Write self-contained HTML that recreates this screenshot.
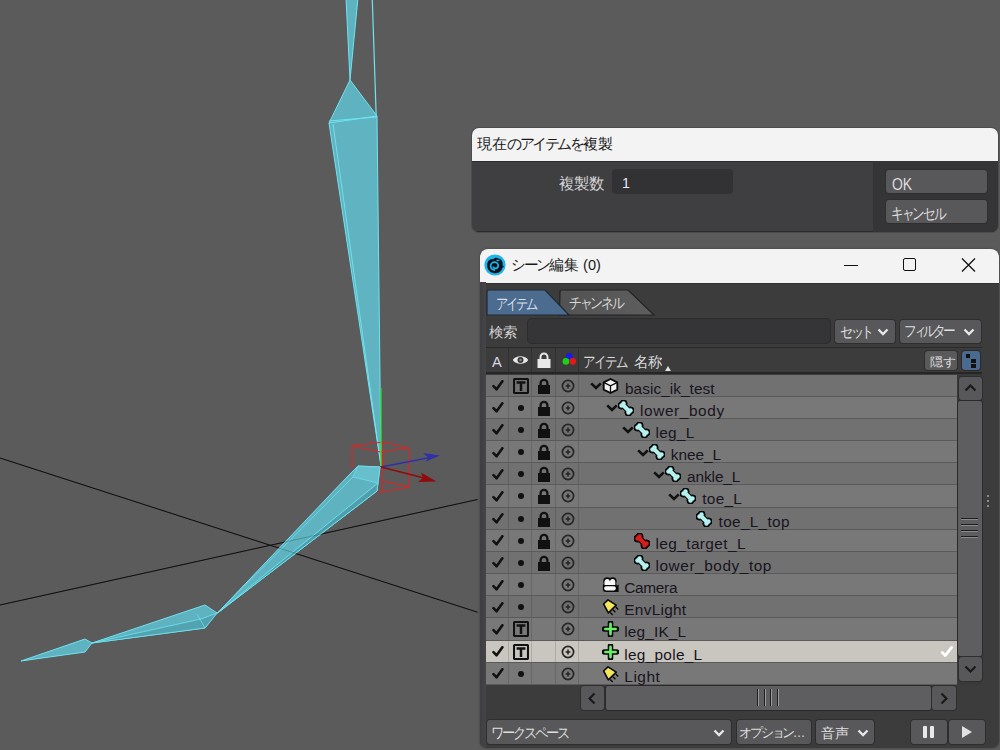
<!DOCTYPE html>
<html><head><meta charset="utf-8"><style>
*{box-sizing:border-box;margin:0;padding:0}
html,body{width:1000px;height:750px;overflow:hidden;background:#5b5b5b;font-family:"Liberation Sans",sans-serif;}
.a{position:absolute}
.t{position:absolute;white-space:nowrap}
.k{margin-right:-0.16em}
.ks{margin-right:-0.26em}
#vp{position:absolute;left:0;top:0}
#dlg{position:absolute;left:472px;top:128px;width:526px;height:104px;border-radius:7px;overflow:hidden;background:#3f3f41;box-shadow:0 0 0 1px #4c4c4c}
#win{position:absolute;left:480px;top:249px;width:519px;height:499px;border-radius:8px 8px 7px 7px;overflow:hidden;background:#3c3c3d;box-shadow:0 0 3px rgba(0,0,0,0.3)}
.tb{position:absolute;left:0;top:0;height:33px;background:#f3f3f3;color:#1a1a1a;font-size:15px}
.btn{position:absolute;background:#58585a;border-radius:3px;color:#dedede;font-size:14px;box-shadow:0 0 0 1px #2e2e2e}
.row{position:absolute;left:6px;width:471px;height:22px}
.cell{position:absolute;top:0;height:22px;border-right:1px solid rgba(0,0,0,0.13)}
.nm{position:absolute;z-index:3;font-size:15.4px;letter-spacing:0.2px;color:#181420;top:5px;white-space:nowrap}
</style></head>
<body>

<svg width="0" height="0" style="position:absolute">
<defs>
 <symbol id="chk" viewBox="0 0 12 11"><path d="M1.5 6.2 L4.6 9.3 L10.4 1.2" fill="none" stroke="#111" stroke-width="2.6" stroke-linecap="round" stroke-linejoin="round"/></symbol>
 <symbol id="tbx" viewBox="0 0 16 16"><rect x="1" y="1" width="14" height="14" rx="0.8" fill="none" stroke="#111" stroke-width="2.1"/><path d="M3.6 4.6 H12.4 M8 4.6 V13" stroke="#111" stroke-width="2.5" fill="none"/></symbol>
 <symbol id="lck" viewBox="0 0 14 16"><path d="M3.6 7.5 V5.2 A3.4 3.4 0 0 1 10.4 5.2 V7.5" fill="none" stroke="#111" stroke-width="2.3"/><rect x="1" y="7" width="12" height="9" fill="#111"/></symbol>
 <symbol id="cpl" viewBox="0 0 14 14"><circle cx="7" cy="7" r="5.6" fill="none" stroke="#262626" stroke-width="1.7"/><path d="M7 4.6 V9.4 M4.6 7 H9.4" stroke="#262626" stroke-width="1.6"/></symbol>
 <symbol id="chev" viewBox="0 0 12 8"><path d="M1.2 1.4 L6 6 L10.8 1.4" fill="none" stroke="#111" stroke-width="2.7" stroke-linejoin="miter"/></symbol>
 <symbol id="bone" viewBox="0 0 16 16"><g fill="#0a0a0a" stroke="#0a0a0a"><line x1="4.5" y1="4.5" x2="11.5" y2="11.5" stroke-width="6.6"/><circle cx="3.4" cy="5.6" r="3.5"/><circle cx="5.6" cy="3.4" r="3.5"/><circle cx="10.4" cy="12.6" r="3.5"/><circle cx="12.6" cy="10.4" r="3.5"/></g><g fill="#b4f2f0" stroke="#b4f2f0"><line x1="4.5" y1="4.5" x2="11.5" y2="11.5" stroke-width="4"/><circle cx="3.5" cy="5.5" r="2.2" stroke="none"/><circle cx="5.5" cy="3.5" r="2.2" stroke="none"/><circle cx="10.5" cy="12.5" r="2.2" stroke="none"/><circle cx="12.5" cy="10.5" r="2.2" stroke="none"/></g></symbol>
 <symbol id="boner" viewBox="0 0 16 16"><g fill="#0a0a0a" stroke="#0a0a0a"><line x1="4.5" y1="4.5" x2="11.5" y2="11.5" stroke-width="6.6"/><circle cx="3.4" cy="5.6" r="3.5"/><circle cx="5.6" cy="3.4" r="3.5"/><circle cx="10.4" cy="12.6" r="3.5"/><circle cx="12.6" cy="10.4" r="3.5"/></g><g fill="#dc1c1c" stroke="#dc1c1c"><line x1="4.5" y1="4.5" x2="11.5" y2="11.5" stroke-width="4"/><circle cx="3.5" cy="5.5" r="2.2" stroke="none"/><circle cx="5.5" cy="3.5" r="2.2" stroke="none"/><circle cx="10.5" cy="12.5" r="2.2" stroke="none"/><circle cx="12.5" cy="10.5" r="2.2" stroke="none"/></g></symbol>
 <symbol id="cube" viewBox="0 0 16 16"><path d="M8 1 L14.8 4.4 V11.6 L8 15 L1.2 11.6 V4.4 Z" fill="#f2f2f2" stroke="#0a0a0a" stroke-width="1.9" stroke-linejoin="round"/><path d="M1.5 4.6 L8 7.8 L14.5 4.6 M8 7.8 V14.5" fill="none" stroke="#0a0a0a" stroke-width="1.3"/></symbol>
 <symbol id="cam" viewBox="0 0 17 16"><g fill="#0a0a0a"><circle cx="5.2" cy="4.3" r="4"/><circle cx="10.6" cy="4.3" r="4"/><rect x="0.8" y="6" width="14" height="9" rx="3"/><path d="M12 10.5 L16.6 7.5 L16.6 15 L12 15 Z"/></g><g fill="#f8f8f8"><circle cx="5.2" cy="4.4" r="2.5"/><circle cx="10.6" cy="4.4" r="2.5"/><rect x="2.5" y="4.4" width="10.8" height="3.6"/><rect x="2.2" y="9.2" width="11.6" height="4.2" rx="1.8"/></g></symbol>
 <symbol id="lgt" viewBox="0 0 17 17"><path d="M1.6 5 L6 0.9 L14.2 6.2 L6.3 13.8 Z" fill="#f4e85a" stroke="#0a0a0a" stroke-width="1.6" stroke-linejoin="round"/><path d="M13.8 8.1 L16.2 10.6 M11 10.8 L13.4 13.3 M8.3 13.5 L10.7 16" stroke="#0a0a0a" stroke-width="1.4"/></symbol>
 <symbol id="plus" viewBox="0 0 16 16"><path d="M8 2 V14 M2 8 H14" stroke="#0a0a0a" stroke-width="5.6" stroke-linecap="round"/><path d="M8 2.9 V13.1 M2.9 8 H13.1" stroke="#6aee6a" stroke-width="2.7" stroke-linecap="round"/></symbol>
</defs></svg>

<svg id="vp" width="1000" height="750" viewBox="0 0 1000 750">
  <g stroke="#101010" stroke-width="1" fill="none">
    <line x1="0" y1="458" x2="477.5" y2="612.2"/>
    <line x1="0" y1="605" x2="477.5" y2="499.5"/>
  </g>
  <g fill="#5fb3c0" stroke="#6fe3f2" stroke-width="1" stroke-linejoin="round">
    <!-- top spike -->
    <polygon points="346,-2 358,-2 350,80"/>
    <line x1="372.3" y1="0" x2="376.2" y2="116" stroke-width="1.2"/>
    <!-- thigh pyramid -->
    <polygon points="350,80 377,116 333,124 329,123"/>
    <polygon points="329,123 377,116 381,466" fill="#60b4c2"/>
    <line x1="333" y1="124" x2="381" y2="466" stroke="#7ae8f5" stroke-width="0.8"/>
    <line x1="329" y1="121" x2="377" y2="117" />
    <!-- shin -->
    <polygon points="358,466 380,467 378,483 377,491 217.5,613 347,477"/>
    <polygon points="378,483 377,491 217.5,613" fill="#4e9eac" stroke-width="0.9"/>
    <polygon points="358,466 380,467 378,483 353,477" fill="#68bfcc" stroke-width="0.7"/>
    <line x1="353" y1="477" x2="217.5" y2="613" stroke-width="0.7"/>
    <!-- foot -->
    <polygon points="205,605 217,613 205,628 92,643"/>
    <polygon points="217,613 205,628 92,643 201,619" fill="#52a2b0" stroke-width="0.8"/>
    <line x1="197" y1="614" x2="205" y2="628" stroke-width="0.7"/>
    <!-- toe -->
    <polygon points="85,639 92,643 85,652 21,661"/>
  </g>
  <g stroke="#101010" stroke-width="1" fill="none" opacity="0.22">
    <line x1="0" y1="458" x2="477.5" y2="612.2"/>
    <line x1="0" y1="605" x2="477.5" y2="499.5"/>
  </g>
  <!-- red box -->
  <g stroke="#e02424" stroke-width="1.1" fill="none">
    <polyline points="352,468 352,446 383,442 409,448 380,452 352,446"/>
    <line x1="409" y1="448" x2="409" y2="487"/>
    <line x1="382" y1="452" x2="382" y2="492"/>
    <polyline points="377,492 382,492 409,487"/>
    <polyline points="382,481 409,487" />
    <line x1="383" y1="442" x2="383" y2="470"/>
  </g>
  <line x1="381" y1="388" x2="381" y2="466" stroke="#30d830" stroke-width="1.3"/>
  <g stroke-width="1.7">
    <line x1="381" y1="467" x2="430" y2="457.5" stroke="#3030a8"/>
    <polygon points="440,455.5 423,453 428,457.5 426,461.5" fill="#3030a8"/>
    <line x1="381" y1="467" x2="426" y2="478.5" stroke="#900c0c"/>
    <polygon points="436.5,481.5 421,472.5 423,477.5 418,482" fill="#900c0c"/>
  </g>
</svg>

<div id="dlg">
  <div class="tb" style="width:526px"></div>
  <div class="a" style="left:0;top:33px;width:526px;height:1px;background:#2c2c2e"></div>
  <div class="a" style="left:0;top:103px;width:526px;height:1px;background:#2a2a2c"></div>
  
  <div class="a" style="left:140px;top:41px;width:121px;height:25px;background:#323234;border-radius:4px"></div>
  
  <div class="a" style="left:401px;top:33px;width:125px;height:71px;background:#353537"></div>
  <div class="btn" style="left:414px;top:42px;width:101px;height:23px;"></div>
  <div class="btn" style="left:414px;top:72px;width:101px;height:23px;"></div>
</div>


<div id="win">
  <div class="a" style="left:0;top:34px;width:519px;height:1px;background:#333335"></div>
  <div class="tb" style="width:519px;height:34px">
    <svg class="a" style="left:3.5px;top:5px" width="22" height="22" viewBox="0 0 22 22">
      <circle cx="11" cy="11" r="10.6" fill="#1cb4ec"/>
      <path d="M3.2 12 C3 7 6 4.5 9.5 5.2 C10.5 3.6 13 3.2 15 4.8 C17.8 5.2 19 8.5 18.6 11.5 L20 12.5 L18.2 14 C17.5 17.5 14.5 19.4 11 19.2 C6.5 19 3.4 16 3.2 12 Z" fill="#06131c"/>
      <path d="M11 16.2 C8.3 16.2 6.6 14.3 6.6 12 C6.6 9.8 8.4 8.2 10.6 8.2 C12.6 8.2 14.2 9.7 14.2 11.6 C14.2 13.3 12.9 14.4 11.4 14.4 C10.2 14.4 9.4 13.6 9.4 12.5" fill="none" stroke="#1cb4ec" stroke-width="1.7"/>
      <path d="M12.5 6.2 L15.5 6.6" stroke="#1cb4ec" stroke-width="1.2"/>
    </svg>
    
    <div class="a" style="left:364px;top:16px;width:14px;height:1.3px;background:#111"></div>
    <div class="a" style="left:423px;top:9px;width:13px;height:13px;border:1.3px solid #111;border-radius:2px"></div>
    <svg class="a" style="left:481px;top:9px" width="15" height="14" viewBox="0 0 15 14"><path d="M1 0.5 L14 13.5 M14 0.5 L1 13.5" stroke="#111" stroke-width="1.3"/></svg>
  </div>
  <!-- left darker band -->
  <div class="a" style="left:0;top:33px;width:6px;height:466px;background:linear-gradient(90deg,#3e3e40,#454547)"></div>

  <!-- tabs -->
  <svg class="a" style="left:0;top:38px" width="200" height="32" viewBox="0 0 200 32">
    <defs><linearGradient id="tg2" x1="0" x2="1"><stop offset="0" stop-color="#525252"/><stop offset="1" stop-color="#5e5e5e"/></linearGradient></defs><path d="M79.5 28 L80 5 Q80 3 82 3 L148 3 L174 28 Z" fill="url(#tg2)" stroke="#232323" stroke-width="1.2"/>
    <path d="M7 28 L7 5 Q7 3 9 3 L65 3 L89 28 Z" fill="#4b6b8f" stroke="#1e2a36" stroke-width="1.2"/>
  </svg>
  
  

  <!-- search row -->
  
  <div class="a" style="left:48px;top:70px;width:302px;height:24px;background:#353537;border-radius:4px;box-shadow:0 0 0 1px #2c2c2c"></div>
  <div class="btn" style="left:355px;top:71px;width:60px;height:23px;">
    <svg class="a" style="left:42px;top:8px" width="12" height="8" viewBox="0 0 12 8"><path d="M1.5 1.5 L6 6 L10.5 1.5" fill="none" stroke="#e8e8e8" stroke-width="2.3"/></svg></div>
  <div class="btn" style="left:420px;top:71px;width:81px;height:23px;">
    <svg class="a" style="left:63px;top:8px" width="12" height="8" viewBox="0 0 12 8"><path d="M1.5 1.5 L6 6 L10.5 1.5" fill="none" stroke="#e8e8e8" stroke-width="2.3"/></svg></div>

  <!-- header -->
  <div class="a" style="left:6px;top:98px;width:496px;height:1px;background:#2a2a2a"></div>
  <div class="a" style="left:28px;top:99px;width:1px;height:24px;background:#303030"></div>
  <div class="a" style="left:51px;top:99px;width:1px;height:24px;background:#303030"></div>
  <div class="a" style="left:75px;top:99px;width:1px;height:24px;background:#303030"></div>
  <div class="a" style="left:98px;top:99px;width:1px;height:24px;background:#303030"></div>
  
  <svg class="a" style="left:32px;top:105px" width="17" height="12" viewBox="0 0 17 12"><path d="M0.8 6 C3.5 1 13.5 1 16.2 6 C13.5 11 3.5 11 0.8 6 Z" fill="#e8e8e8"/><circle cx="8.5" cy="6" r="3" fill="#3a3a3a"/><circle cx="8.5" cy="6" r="1.2" fill="#888"/></svg>
  <svg class="a" style="left:57px;top:103px" width="14" height="16" viewBox="0 0 14 16"><path d="M3.5 7 V5 A3.5 3.5 0 0 1 10.5 5 V7" fill="none" stroke="#e8e8e8" stroke-width="2"/><rect x="0.5" y="7" width="13" height="9" fill="#e8e8e8"/></svg>
  <svg class="a" style="left:82px;top:102px" width="14" height="16" viewBox="0 0 14 16"><circle cx="7.3" cy="5.2" r="3.3" fill="#1a1ae8"/><circle cx="3.9" cy="10.4" r="3.3" fill="#18d418"/><circle cx="10.8" cy="10.4" r="3.3" fill="#e41818"/></svg>
  
  <svg class="a" style="left:185px;top:117px" width="6" height="5" viewBox="0 0 6 5"><path d="M0 5 L3 0 L6 5 Z" fill="#e0e0e0"/></svg>
  <div class="btn" style="left:445px;top:102px;width:32px;height:19px;background:#5a5a5c"></div>
  <div class="a" style="left:482px;top:102px;width:18px;height:19px;background:#4a6a90;border-radius:3px;box-shadow:0 0 0 1px #2a2a2a"></div>
  <div class="a" style="left:486px;top:105px;width:4px;height:4px;background:#111"></div>
  <div class="a" style="left:491px;top:110px;width:5px;height:4px;background:#111"></div>
  <div class="a" style="left:491px;top:115px;width:5px;height:4px;background:#111"></div>
  <div class="a" style="left:6px;top:123px;width:496px;height:2px;background:#262626"></div>

  <!-- rows -->
  <div class="row" style="top:125.50px;background:#717171"><div class="cell" style="left:0;width:23px"></div><div class="cell" style="left:23px;width:23px"></div><div class="cell" style="left:46px;width:24px"></div><div class="cell" style="left:70px;width:23px"></div><svg class="a" style="left:6px;top:5.5px" width="12" height="11"><use href="#chk"/></svg><svg class="a" style="left:26.8px;top:3px" width="16" height="16"><use href="#tbx"/></svg><svg class="a" style="left:51px;top:3px" width="14" height="16"><use href="#lck"/></svg><svg class="a" style="left:74.6px;top:4px" width="14" height="14"><use href="#cpl"/></svg><svg class="a" style="left:104.3px;top:7.5px" width="12" height="8"><use href="#chev"/></svg><svg class="a" style="left:116.3px;top:3px" width="17" height="16"><use href="#cube"/></svg><span class="nm" id="nm_basic_ik_test" style="left:139.00px;letter-spacing:0.046px">basic_ik_test</span></div>
<div class="a" style="left:6px;top:146.67px;width:471px;height:1px;background:#5a5a5a"></div>
<div class="row" style="top:147.67px;background:#787878"><div class="cell" style="left:0;width:23px"></div><div class="cell" style="left:23px;width:23px"></div><div class="cell" style="left:46px;width:24px"></div><div class="cell" style="left:70px;width:23px"></div><svg class="a" style="left:6px;top:5.5px" width="12" height="11"><use href="#chk"/></svg><div class="a" style="left:32px;top:8px;width:6px;height:6px;border-radius:50%;background:#111"></div><svg class="a" style="left:51px;top:3px" width="14" height="16"><use href="#lck"/></svg><svg class="a" style="left:74.6px;top:4px" width="14" height="14"><use href="#cpl"/></svg><svg class="a" style="left:120.0px;top:7.5px" width="12" height="8"><use href="#chev"/></svg><svg class="a" style="left:132.0px;top:3px" width="16" height="16"><use href="#bone"/></svg><span class="nm" id="nm_lower_body" style="left:154.00px;letter-spacing:0.6px">lower_body</span></div>
<div class="a" style="left:6px;top:168.84px;width:471px;height:1px;background:#5a5a5a"></div>
<div class="row" style="top:169.84px;background:#717171"><div class="cell" style="left:0;width:23px"></div><div class="cell" style="left:23px;width:23px"></div><div class="cell" style="left:46px;width:24px"></div><div class="cell" style="left:70px;width:23px"></div><svg class="a" style="left:6px;top:5.5px" width="12" height="11"><use href="#chk"/></svg><div class="a" style="left:32px;top:8px;width:6px;height:6px;border-radius:50%;background:#111"></div><svg class="a" style="left:51px;top:3px" width="14" height="16"><use href="#lck"/></svg><svg class="a" style="left:74.6px;top:4px" width="14" height="14"><use href="#cpl"/></svg><svg class="a" style="left:135.5px;top:7.5px" width="12" height="8"><use href="#chev"/></svg><svg class="a" style="left:147.5px;top:3px" width="16" height="16"><use href="#bone"/></svg><span class="nm" id="nm_leg_L" style="left:169.60px;letter-spacing:0.24px">leg_L</span></div>
<div class="a" style="left:6px;top:191.01px;width:471px;height:1px;background:#5a5a5a"></div>
<div class="row" style="top:192.01px;background:#787878"><div class="cell" style="left:0;width:23px"></div><div class="cell" style="left:23px;width:23px"></div><div class="cell" style="left:46px;width:24px"></div><div class="cell" style="left:70px;width:23px"></div><svg class="a" style="left:6px;top:5.5px" width="12" height="11"><use href="#chk"/></svg><div class="a" style="left:32px;top:8px;width:6px;height:6px;border-radius:50%;background:#111"></div><svg class="a" style="left:51px;top:3px" width="14" height="16"><use href="#lck"/></svg><svg class="a" style="left:74.6px;top:4px" width="14" height="14"><use href="#cpl"/></svg><svg class="a" style="left:151.0px;top:7.5px" width="12" height="8"><use href="#chev"/></svg><svg class="a" style="left:163.0px;top:3px" width="16" height="16"><use href="#bone"/></svg><span class="nm" id="nm_knee_L" style="left:184.80px;letter-spacing:-0.049px">knee_L</span></div>
<div class="a" style="left:6px;top:213.18px;width:471px;height:1px;background:#5a5a5a"></div>
<div class="row" style="top:214.18px;background:#717171"><div class="cell" style="left:0;width:23px"></div><div class="cell" style="left:23px;width:23px"></div><div class="cell" style="left:46px;width:24px"></div><div class="cell" style="left:70px;width:23px"></div><svg class="a" style="left:6px;top:5.5px" width="12" height="11"><use href="#chk"/></svg><div class="a" style="left:32px;top:8px;width:6px;height:6px;border-radius:50%;background:#111"></div><svg class="a" style="left:51px;top:3px" width="14" height="16"><use href="#lck"/></svg><svg class="a" style="left:74.6px;top:4px" width="14" height="14"><use href="#cpl"/></svg><svg class="a" style="left:166.5px;top:7.5px" width="12" height="8"><use href="#chev"/></svg><svg class="a" style="left:178.5px;top:3px" width="16" height="16"><use href="#bone"/></svg><span class="nm" id="nm_ankle_L" style="left:201.10px;letter-spacing:-0.111px">ankle_L</span></div>
<div class="a" style="left:6px;top:235.35px;width:471px;height:1px;background:#5a5a5a"></div>
<div class="row" style="top:236.35px;background:#787878"><div class="cell" style="left:0;width:23px"></div><div class="cell" style="left:23px;width:23px"></div><div class="cell" style="left:46px;width:24px"></div><div class="cell" style="left:70px;width:23px"></div><svg class="a" style="left:6px;top:5.5px" width="12" height="11"><use href="#chk"/></svg><div class="a" style="left:32px;top:8px;width:6px;height:6px;border-radius:50%;background:#111"></div><svg class="a" style="left:51px;top:3px" width="14" height="16"><use href="#lck"/></svg><svg class="a" style="left:74.6px;top:4px" width="14" height="14"><use href="#cpl"/></svg><svg class="a" style="left:182.0px;top:7.5px" width="12" height="8"><use href="#chev"/></svg><svg class="a" style="left:194.0px;top:3px" width="16" height="16"><use href="#bone"/></svg><span class="nm" id="nm_toe_L" style="left:216.30px;letter-spacing:0.26px">toe_L</span></div>
<div class="a" style="left:6px;top:257.52px;width:471px;height:1px;background:#5a5a5a"></div>
<div class="row" style="top:258.52px;background:#717171"><div class="cell" style="left:0;width:23px"></div><div class="cell" style="left:23px;width:23px"></div><div class="cell" style="left:46px;width:24px"></div><div class="cell" style="left:70px;width:23px"></div><svg class="a" style="left:6px;top:5.5px" width="12" height="11"><use href="#chk"/></svg><div class="a" style="left:32px;top:8px;width:6px;height:6px;border-radius:50%;background:#111"></div><svg class="a" style="left:51px;top:3px" width="14" height="16"><use href="#lck"/></svg><svg class="a" style="left:74.6px;top:4px" width="14" height="14"><use href="#cpl"/></svg><svg class="a" style="left:209.5px;top:3px" width="16" height="16"><use href="#bone"/></svg><span class="nm" id="nm_toe_L_top" style="left:232.60px;letter-spacing:0.299px">toe_L_top</span></div>
<div class="a" style="left:6px;top:279.69px;width:471px;height:1px;background:#5a5a5a"></div>
<div class="row" style="top:280.69px;background:#787878"><div class="cell" style="left:0;width:23px"></div><div class="cell" style="left:23px;width:23px"></div><div class="cell" style="left:46px;width:24px"></div><div class="cell" style="left:70px;width:23px"></div><svg class="a" style="left:6px;top:5.5px" width="12" height="11"><use href="#chk"/></svg><div class="a" style="left:32px;top:8px;width:6px;height:6px;border-radius:50%;background:#111"></div><svg class="a" style="left:51px;top:3px" width="14" height="16"><use href="#lck"/></svg><svg class="a" style="left:74.6px;top:4px" width="14" height="14"><use href="#cpl"/></svg><svg class="a" style="left:147.5px;top:3px" width="16" height="16"><use href="#boner"/></svg><span class="nm" id="nm_leg_target_L" style="left:169.50px;letter-spacing:0.401px">leg_target_L</span></div>
<div class="a" style="left:6px;top:301.86px;width:471px;height:1px;background:#5a5a5a"></div>
<div class="row" style="top:302.86px;background:#717171"><div class="cell" style="left:0;width:23px"></div><div class="cell" style="left:23px;width:23px"></div><div class="cell" style="left:46px;width:24px"></div><div class="cell" style="left:70px;width:23px"></div><svg class="a" style="left:6px;top:5.5px" width="12" height="11"><use href="#chk"/></svg><div class="a" style="left:32px;top:8px;width:6px;height:6px;border-radius:50%;background:#111"></div><svg class="a" style="left:51px;top:3px" width="14" height="16"><use href="#lck"/></svg><svg class="a" style="left:74.6px;top:4px" width="14" height="14"><use href="#cpl"/></svg><svg class="a" style="left:147.5px;top:3px" width="16" height="16"><use href="#bone"/></svg><span class="nm" id="nm_lower_body_top" style="left:169.50px;letter-spacing:0.557px">lower_body_top</span></div>
<div class="a" style="left:6px;top:324.03px;width:471px;height:1px;background:#5a5a5a"></div>
<div class="row" style="top:325.03px;background:#787878"><div class="cell" style="left:0;width:23px"></div><div class="cell" style="left:23px;width:23px"></div><div class="cell" style="left:46px;width:24px"></div><div class="cell" style="left:70px;width:23px"></div><svg class="a" style="left:6px;top:5.5px" width="12" height="11"><use href="#chk"/></svg><div class="a" style="left:32px;top:8px;width:6px;height:6px;border-radius:50%;background:#111"></div><svg class="a" style="left:74.6px;top:4px" width="14" height="14"><use href="#cpl"/></svg><svg class="a" style="left:116.3px;top:3px" width="17" height="16"><use href="#cam"/></svg><span class="nm" id="nm_Camera" style="left:138.30px;letter-spacing:-0.314px">Camera</span></div>
<div class="a" style="left:6px;top:346.20px;width:471px;height:1px;background:#5a5a5a"></div>
<div class="row" style="top:347.20px;background:#717171"><div class="cell" style="left:0;width:23px"></div><div class="cell" style="left:23px;width:23px"></div><div class="cell" style="left:46px;width:24px"></div><div class="cell" style="left:70px;width:23px"></div><svg class="a" style="left:6px;top:5.5px" width="12" height="11"><use href="#chk"/></svg><div class="a" style="left:32px;top:8px;width:6px;height:6px;border-radius:50%;background:#111"></div><svg class="a" style="left:74.6px;top:4px" width="14" height="14"><use href="#cpl"/></svg><svg class="a" style="left:116.3px;top:3px" width="17" height="17"><use href="#lgt"/></svg><span class="nm" id="nm_EnvLight" style="left:138.30px;letter-spacing:0.275px">EnvLight</span></div>
<div class="a" style="left:6px;top:368.37px;width:471px;height:1px;background:#5a5a5a"></div>
<div class="row" style="top:369.37px;background:#787878"><div class="cell" style="left:0;width:23px"></div><div class="cell" style="left:23px;width:23px"></div><div class="cell" style="left:46px;width:24px"></div><div class="cell" style="left:70px;width:23px"></div><svg class="a" style="left:6px;top:5.5px" width="12" height="11"><use href="#chk"/></svg><svg class="a" style="left:26.8px;top:3px" width="16" height="16"><use href="#tbx"/></svg><svg class="a" style="left:74.6px;top:4px" width="14" height="14"><use href="#cpl"/></svg><svg class="a" style="left:116.3px;top:3px" width="17" height="16"><use href="#plus"/></svg><span class="nm" id="nm_leg_IK_L" style="left:138.30px;letter-spacing:0.15px">leg_IK_L</span></div>
<div class="a" style="left:6px;top:390.54px;width:471px;height:1px;background:#5a5a5a"></div>
<div class="row" style="top:391.54px;background:#c9c6bf"><div class="cell" style="left:0;width:23px"></div><div class="cell" style="left:23px;width:23px"></div><div class="cell" style="left:46px;width:24px"></div><div class="cell" style="left:70px;width:23px"></div><svg class="a" style="left:6px;top:5.5px" width="12" height="11"><use href="#chk"/></svg><svg class="a" style="left:26.8px;top:3px" width="16" height="16"><use href="#tbx"/></svg><svg class="a" style="left:74.6px;top:4px" width="14" height="14"><use href="#cpl"/></svg><svg class="a" style="left:116.3px;top:3px" width="17" height="16"><use href="#plus"/></svg><span class="nm" id="nm_leg_pole_L" style="left:138.30px;letter-spacing:0.28px">leg_pole_L</span><svg class="a" style="left:454px;top:4px" width="14" height="13" viewBox="0 0 14 13"><path d="M2.2 7.4 L5.2 10.6 L11.6 2.4" fill="none" stroke="#fff" stroke-width="2.8" stroke-linecap="round" stroke-linejoin="round"/></svg></div>
<div class="a" style="left:6px;top:412.71px;width:471px;height:1px;background:#5a5a5a"></div>
<div class="row" style="top:413.71px;background:#787878"><div class="cell" style="left:0;width:23px"></div><div class="cell" style="left:23px;width:23px"></div><div class="cell" style="left:46px;width:24px"></div><div class="cell" style="left:70px;width:23px"></div><svg class="a" style="left:6px;top:5.5px" width="12" height="11"><use href="#chk"/></svg><div class="a" style="left:32px;top:8px;width:6px;height:6px;border-radius:50%;background:#111"></div><svg class="a" style="left:74.6px;top:4px" width="14" height="14"><use href="#cpl"/></svg><svg class="a" style="left:116.3px;top:3px" width="17" height="17"><use href="#lgt"/></svg><span class="nm" id="nm_Light" style="left:138.30px;letter-spacing:0.52px">Light</span></div>
<div class="a" style="left:6px;top:434.88px;width:471px;height:1px;background:#5a5a5a"></div>

  <!-- vertical scrollbar -->
  <div class="a" style="left:477px;top:125px;width:25px;height:311px;background:#3a3a3b"></div>
  <div class="btn" style="left:479px;top:128px;width:23px;height:23px;background:#58585a"></div>
  <svg class="a" style="left:484px;top:135px" width="13" height="8" viewBox="0 0 13 8"><path d="M1.5 6.5 L6.5 1.5 L11.5 6.5" fill="none" stroke="#1a1a1a" stroke-width="2.2"/></svg>
  <div class="a" style="left:478px;top:152px;width:24px;height:255px;background:#5e5e60;border-radius:2px;box-shadow:0 0 0 1px #2a2a2a"></div>
  <div class="a" style="left:481px;top:269px;width:17px;height:2px;background:linear-gradient(#1e1e1e 50%,#8a8a8a 50%)"></div>
  <div class="a" style="left:481px;top:275px;width:17px;height:2px;background:linear-gradient(#1e1e1e 50%,#8a8a8a 50%)"></div>
  <div class="a" style="left:481px;top:281px;width:17px;height:2px;background:linear-gradient(#1e1e1e 50%,#8a8a8a 50%)"></div>
  <div class="a" style="left:481px;top:287px;width:17px;height:2px;background:linear-gradient(#1e1e1e 50%,#8a8a8a 50%)"></div>
  <div class="btn" style="left:479px;top:408px;width:23px;height:24px;background:#58585a"></div>
  <svg class="a" style="left:484px;top:416px" width="13" height="8" viewBox="0 0 13 8"><path d="M1.5 1.5 L6.5 6.5 L11.5 1.5" fill="none" stroke="#1a1a1a" stroke-width="2.2"/></svg>
  <!-- resize dots -->
  <div class="a" style="left:507px;top:246px;width:2px;height:2px;background:#8a8a8a"></div>
  <div class="a" style="left:507px;top:251px;width:2px;height:2px;background:#8a8a8a"></div>
  <div class="a" style="left:507px;top:256px;width:2px;height:2px;background:#8a8a8a"></div>

  <!-- horizontal scrollbar -->
  <div class="btn" style="left:101px;top:437px;width:23px;height:24px;background:#58585a"></div>
  <svg class="a" style="left:108px;top:443px" width="8" height="13" viewBox="0 0 8 13"><path d="M6.5 1.5 L1.5 6.5 L6.5 11.5" fill="none" stroke="#1a1a1a" stroke-width="2.2"/></svg>
  <div class="a" style="left:126px;top:437px;width:325px;height:24px;background:#5e5e60;border-radius:2px;box-shadow:0 0 0 1px #2a2a2a"></div>
  <div class="a" style="left:277px;top:440px;width:2px;height:17px;background:linear-gradient(90deg,#1e1e1e 50%,#9a9a9a 50%)"></div>
  <div class="a" style="left:284px;top:440px;width:2px;height:17px;background:linear-gradient(90deg,#1e1e1e 50%,#9a9a9a 50%)"></div>
  <div class="a" style="left:290px;top:440px;width:2px;height:17px;background:linear-gradient(90deg,#1e1e1e 50%,#9a9a9a 50%)"></div>
  <div class="a" style="left:297px;top:440px;width:2px;height:17px;background:linear-gradient(90deg,#1e1e1e 50%,#9a9a9a 50%)"></div>
  <div class="btn" style="left:452px;top:437px;width:24px;height:24px;background:#58585a"></div>
  <svg class="a" style="left:460px;top:443px" width="8" height="13" viewBox="0 0 8 13"><path d="M1.5 1.5 L6.5 6.5 L1.5 11.5" fill="none" stroke="#1a1a1a" stroke-width="2.2"/></svg>

  <!-- bottom bar -->
  <div class="btn" style="left:7px;top:471px;width:244px;height:24px;">
    <svg class="a" style="left:226px;top:9px" width="12" height="8" viewBox="0 0 12 8"><path d="M1.5 1.5 L6 6 L10.5 1.5" fill="none" stroke="#e8e8e8" stroke-width="2.3"/></svg></div>
  <div class="btn" style="left:257px;top:471px;width:74px;height:24px;"></div>
  <div class="btn" style="left:336px;top:471px;width:58px;height:24px;">
    <svg class="a" style="left:41px;top:9px" width="12" height="8" viewBox="0 0 12 8"><path d="M1.5 1.5 L6 6 L10.5 1.5" fill="none" stroke="#e8e8e8" stroke-width="2.3"/></svg></div>
  <div class="btn" style="left:431px;top:471px;width:36px;height:24px;"></div>
  <div class="a" style="left:443px;top:477px;width:4px;height:12px;background:#e8e8e8;border-radius:1px"></div>
  <div class="a" style="left:450px;top:477px;width:4px;height:12px;background:#e8e8e8;border-radius:1px"></div>
  <div class="btn" style="left:469px;top:471px;width:36px;height:24px;"></div>
  <svg class="a" style="left:481px;top:476px" width="12" height="14" viewBox="0 0 12 14"><path d="M1 1 L11 7 L1 13 Z" fill="#e0e0e0"/></svg>
</div>

<span class="t fx" id="dlg_title" style="left:477.0px;top:134.66px;font-size:15.12px;letter-spacing:0.0px;color:#1a1a1a;font-weight:normal;line-height:1.2;transform-origin:0 0;transform:scaleY(1.001)">現在<span class="k">の</span><span class="k">ア</span><span class="k">イ</span><span class="k">テ</span><span class="k">ム</span><span class="k">を</span>複製</span>
<span class="t fx" id="dlg_label" style="left:559.0px;top:173.66px;font-size:15.08px;letter-spacing:0.0px;color:#d4d4d4;font-weight:normal;line-height:1.2;transform-origin:0 0;transform:scaleY(1.038)">複製数</span>
<span class="t fx" id="dlg_val" style="left:622.0px;top:174.78px;font-size:14.18px;letter-spacing:0.0px;color:#e8e8ff;font-weight:normal;line-height:1.2;transform-origin:0 0;transform:scaleY(1.0)">1</span>
<span class="t fx" id="ok" style="left:892.0px;top:173.6px;font-size:13.98px;letter-spacing:0.0px;color:#dedede;font-weight:normal;line-height:1.2;transform-origin:0 0;transform:scaleY(1.2)">OK</span>
<span class="t fx" id="cancel" style="left:891.0px;top:204.98px;font-size:12.59px;letter-spacing:0.0px;color:#dedede;font-weight:normal;line-height:1.2;transform-origin:0 0;transform:scaleY(1.263)"><span class="k">キ</span><span class="ks">ャ</span><span class="k">ン</span><span class="k">セ</span><span class="k">ル</span></span>
<span class="t fx" id="win_title" style="left:511.0px;top:256.76px;font-size:14.6px;letter-spacing:0.0px;color:#1a1a1a;font-weight:normal;line-height:1.2;transform-origin:0 0;transform:scaleY(1.02)"><span class="k">シ</span><span class="k">ー</span><span class="k">ン</span>編集 (0)</span>
<span class="t fx" id="tab1" style="left:496.0px;top:296.18px;font-size:12.1px;letter-spacing:0.0px;color:#d8dde8;font-weight:normal;line-height:1.2;transform-origin:0 0;transform:scaleY(1.225)"><span class="k">ア</span><span class="k">イ</span><span class="k">テ</span><span class="k">ム</span></span>
<span class="t fx" id="tab2" style="left:569.0px;top:295.18px;font-size:12.66px;letter-spacing:0.0px;color:#d8d8d8;font-weight:normal;line-height:1.2;transform-origin:0 0;transform:scaleY(1.171)"><span class="k">チ</span><span class="ks">ャ</span><span class="k">ン</span><span class="k">ネ</span><span class="k">ル</span></span>
<span class="t fx" id="search" style="left:489.0px;top:323.88px;font-size:14.03px;letter-spacing:0.0px;color:#d0d0d0;font-weight:normal;line-height:1.2;transform-origin:0 0;transform:scaleY(0.966)">検索</span>
<span class="t fx" id="set" style="left:840.0px;top:323.12px;font-size:12.86px;letter-spacing:0.0px;color:#dedede;font-weight:normal;line-height:1.2;transform-origin:0 0;transform:scaleY(1.133)"><span class="k">セ</span><span class="ks">ッ</span><span class="k">ト</span></span>
<span class="t fx" id="filter" style="left:904.0px;top:323.12px;font-size:12.32px;letter-spacing:0.0px;color:#dedede;font-weight:normal;line-height:1.2;transform-origin:0 0;transform:scaleY(1.184)"><span class="k">フ</span><span class="ks">ィ</span><span class="k">ル</span><span class="k">タ</span><span class="k">ー</span></span>
<span class="t fx" id="hdr_a" style="left:492.0px;top:353.8px;font-size:14.6px;letter-spacing:0.0px;color:#d8d8e0;font-weight:normal;line-height:1.2;transform-origin:0 0;transform:scaleY(1.0)">A</span>
<span class="t fx" id="hdr_item" style="left:583.0px;top:354.02px;font-size:12.5px;letter-spacing:0.0px;color:#d8d8d8;font-weight:normal;line-height:1.2;transform-origin:0 0;transform:scaleY(1.202)"><span class="k">ア</span><span class="k">イ</span><span class="k">テ</span><span class="k">ム</span></span>
<span class="t fx" id="hdr_name" style="left:633.5px;top:354.02px;font-size:14.32px;letter-spacing:0.0px;color:#d8d8d8;font-weight:normal;line-height:1.2;transform-origin:0 0;transform:scaleY(1.032)">名称</span>
<span class="t fx" id="hide" style="left:930.0px;top:355.34px;font-size:13.35px;letter-spacing:0.0px;color:#dedede;font-weight:normal;line-height:1.2;transform-origin:0 0;transform:scaleY(0.92)">隠<span class="k">す</span></span>
<span class="t fx" id="workspace" style="left:491.0px;top:724.12px;font-size:12.9px;letter-spacing:0.0px;color:#dedede;font-weight:normal;line-height:1.2;transform-origin:0 0;transform:scaleY(1.13)"><span class="k">ワ</span><span class="k">ー</span><span class="k">ク</span><span class="k">ス</span><span class="k">ペ</span><span class="k">ー</span><span class="k">ス</span></span>
<span class="t fx" id="options" style="left:739.0px;top:726.12px;font-size:12.55px;letter-spacing:0.0px;color:#dedede;font-weight:normal;line-height:1.2;transform-origin:0 0;transform:scaleY(1.0)"><span class="k">オ</span><span class="k">プ</span><span class="k">シ</span><span class="ks">ョ</span><span class="k">ン</span>…</span>
<span class="t fx" id="audio" style="left:821.0px;top:725.88px;font-size:13.59px;letter-spacing:0.0px;color:#dedede;font-weight:normal;line-height:1.2;transform-origin:0 0;transform:scaleY(1.0)">音声</span>
</body></html>
